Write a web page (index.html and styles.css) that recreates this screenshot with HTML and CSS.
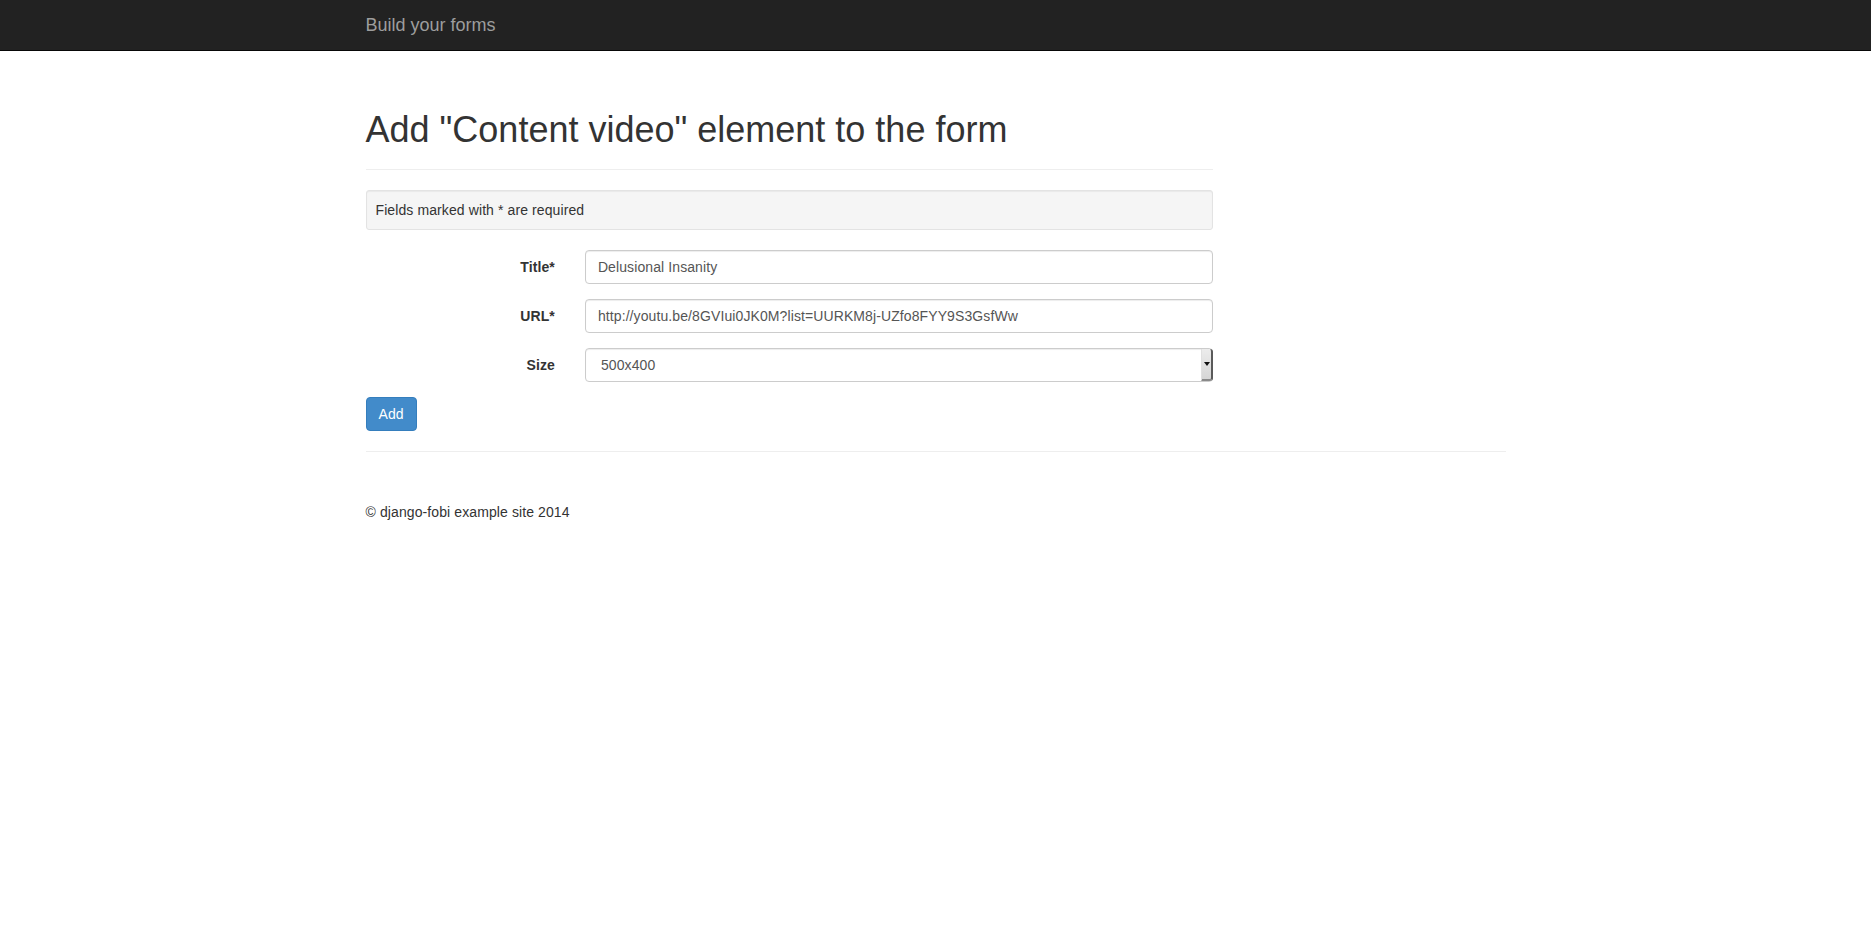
FILE: index.html
```html
<!DOCTYPE html>
<html lang="en">
<head>
<meta charset="utf-8">
<title>Build your forms</title>
<link rel="stylesheet" href="styles.css">
</head>
<body>
<nav class="navbar">
  <div class="container">
    <a class="navbar-brand" href="#">Build your forms</a>
  </div>
</nav>
<main class="container main">
  <div class="form-col">
    <div class="page-header">
      <h1>Add "Content video" element to the form</h1>
    </div>
    <div class="well">Fields marked with * are required</div>
    <form class="form-horizontal">
      <div class="form-group">
        <label class="control-label" for="id_title">Title*</label>
        <input class="form-control" id="id_title" type="text" value="Delusional Insanity">
      </div>
      <div class="form-group">
        <label class="control-label" for="id_url">URL*</label>
        <input class="form-control" id="id_url" type="text" value="http://youtu.be/8GVIui0JK0M?list=UURKM8j-UZfo8FYY9S3GsfWw">
      </div>
      <div class="form-group">
        <label class="control-label" for="id_size">Size</label>
        <div class="select-wrap">
          <select class="form-control select" id="id_size">
            <option>500x400</option>
          </select>
          <span class="select-btn"><span class="select-arrow"></span></span>
        </div>
      </div>
      <button class="btn btn-primary" type="button">Add</button>
    </form>
  </div>
  <hr class="footer-sep">
  <footer class="footer">
    <p>&copy; django-fobi example site 2014</p>
  </footer>
</main>
</body>
</html>
```
FILE: styles.css
```css
* { box-sizing: border-box; }
html, body { margin: 0; padding: 0; }
body {
  font-family: "Liberation Sans", Arial, Helvetica, sans-serif;
  font-size: 14px;
  line-height: 20px;
  letter-spacing: 0.1px;
  color: #333;
  background: #fff;
}
.container {
  width: 1140px;
  margin: 0 auto;
}
.navbar {
  height: 51px;
  background: #222;
  border-bottom: 1px solid #080808;
}
.navbar-brand {
  display: inline-block;
  padding: 15px 0;
  font-size: 18px;
  line-height: 20px;
  letter-spacing: 0;
  color: #9d9d9d;
  text-decoration: none;
}
.main { padding-top: 19px; }
.form-col { width: 847.5px; }
.page-header {
  margin: 40px 0 20px;
  padding-bottom: 9px;
  border-bottom: 1px solid #eee;
}
.page-header h1 {
  margin: 0 0 10px;
  font-size: 36px;
  font-weight: 400;
  line-height: 1.1;
  letter-spacing: 0;
  color: #333;
}
.well {
  padding: 9px;
  margin-bottom: 20px;
  background: #f5f5f5;
  border: 1px solid #e3e3e3;
  border-radius: 3px;
  box-shadow: inset 0 1px 1px rgba(0,0,0,.05);
}
.form-group {
  display: grid;
  grid-template-columns: 189.4px 1fr;
  column-gap: 30px;
  margin-bottom: 15px;
}
.control-label {
  padding-top: 7px;
  text-align: right;
  font-weight: 700;
}
.form-control {
  display: block;
  width: 100%;
  height: 34px;
  padding: 6px 12px;
  font-family: inherit;
  font-size: 14px;
  line-height: 20px;
  letter-spacing: 0.1px;
  color: #555;
  background: #fff;
  border: 1px solid #ccc;
  border-radius: 4px;
  box-shadow: inset 0 1px 1px rgba(0,0,0,.075);
  outline: none;
  margin: 0;
}
.select-wrap { position: relative; }
.select {
  -webkit-appearance: none;
  appearance: none;
  padding-left: 15px;
}
.select-btn {
  position: absolute;
  top: 1px;
  right: 0;
  bottom: 1px;
  width: 12px;
  background: linear-gradient(#ececec, #d6d6d6);
  border-right: 2px solid #5a5a5a;
  border-bottom: 2px solid #8a8a8a;
  border-left: 1px solid #e0e0e0;
  border-radius: 0 3px 3px 0;
  display: flex;
  align-items: center;
  justify-content: center;
}
.select-arrow {
  width: 0;
  height: 0;
  border-left: 3px solid transparent;
  border-right: 3px solid transparent;
  border-top: 4px solid #111;
}
.btn {
  display: inline-block;
  padding: 6px 12px;
  font-family: inherit;
  font-size: 14px;
  line-height: 20px;
  letter-spacing: 0.1px;
  border: 1px solid transparent;
  border-radius: 4px;
  cursor: pointer;
}
.btn-primary {
  color: #fff;
  background: #428bca;
  border-color: #357ebd;
}
.footer-sep {
  margin: 20px 0;
  border: 0;
  border-top: 1px solid #eee;
}
.footer { padding-top: 30px; }
.footer p { margin: 0 0 10px; }
```
